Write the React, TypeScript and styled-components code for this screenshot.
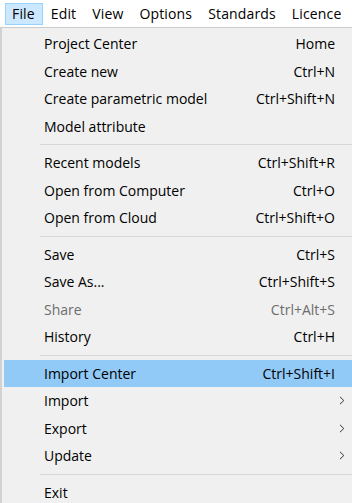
import React from "react";
import styled, { createGlobalStyle } from "styled-components";

const Global = createGlobalStyle`
  html, body { margin: 0; padding: 0; background: #ffffff; overflow: hidden; }
  body { font-family: "Open Sans", "Noto Sans", Arial, sans-serif; }
`;

const Page = styled.div`
  width: 352px;
  height: 503px;
  overflow: hidden;
  background: #ffffff;
  font-size: 14px;
  color: #000;
`;

const MenuBar = styled.div`
  display: flex;
  align-items: center;
  height: 27px;
  padding-left: 5px;
  background: #ffffff;
`;

const BarItem = styled.div<{ $active?: boolean }>`
  height: 22px;
  box-sizing: border-box;
  display: flex;
  align-items: center;
  padding: 0 7px 0 6px;
  margin-right: 1px;
  letter-spacing: 0.15px;
  border: 1px solid ${(p) => (p.$active ? "#99d1ff" : "transparent")};
  background: ${(p) => (p.$active ? "#cce8ff" : "transparent")};
  white-space: nowrap;
`;

const Dropdown = styled.div`
  width: 360px;
  height: 476px;
  box-sizing: border-box;
  background: #f0f0f0;
  border-top: 1px solid #cccccc;
  border-left: 2px solid #d2d2d2;
  padding: 2px 0 0 2px;
`;

const Row = styled.div<{ $hover?: boolean; $disabled?: boolean }>`
  height: 27.5px;
  display: flex;
  align-items: center;
  padding-left: 40px;
  padding-right: 25px;
  background: ${(p) => (p.$hover ? "#91c9f7" : "transparent")};
  color: ${(p) => (p.$disabled ? "#6d6d6d" : "#000000")};
  white-space: nowrap;
`;

const Label = styled.span`
  flex: 1;
`;

const Shortcut = styled.span`
  text-align: right;
`;

const Arrow = styled.svg`
  width: 6px;
  height: 9px;
  margin-right: -10px;
`;

const Separator = styled.div`
  height: 9px;
  display: flex;
  align-items: center;
  padding-left: 36px;
  &::after {
    content: "";
    flex: 1;
    height: 1px;
    background: #d7d7d7;
  }
`;

type Item = { label: string; shortcut?: string; sub?: boolean; disabled?: boolean; hover?: boolean } | "sep";

const items: Item[] = [
  { label: "Project Center", shortcut: "Home" },
  { label: "Create new", shortcut: "Ctrl+N" },
  { label: "Create parametric model", shortcut: "Ctrl+Shift+N" },
  { label: "Model attribute" },
  "sep",
  { label: "Recent models", shortcut: "Ctrl+Shift+R" },
  { label: "Open from Computer", shortcut: "Ctrl+O" },
  { label: "Open from Cloud", shortcut: "Ctrl+Shift+O" },
  "sep",
  { label: "Save", shortcut: "Ctrl+S" },
  { label: "Save As...", shortcut: "Ctrl+Shift+S" },
  { label: "Share", shortcut: "Ctrl+Alt+S", disabled: true },
  { label: "History", shortcut: "Ctrl+H" },
  "sep",
  { label: "Import Center", shortcut: "Ctrl+Shift+I", hover: true },
  { label: "Import", sub: true },
  { label: "Export", sub: true },
  { label: "Update", sub: true },
  "sep",
  { label: "Exit" },
];

export default function App() {
  return (
    <Page>
      <Global />
      <MenuBar>
        <BarItem $active>File</BarItem>
        <BarItem>Edit</BarItem>
        <BarItem>View</BarItem>
        <BarItem>Options</BarItem>
        <BarItem>Standards</BarItem>
        <BarItem>Licence</BarItem>
      </MenuBar>
      <Dropdown>
        {items.map((it, i) =>
          it === "sep" ? (
            <Separator key={i} />
          ) : (
            <Row key={i} $hover={it.hover} $disabled={it.disabled}>
              <Label>{it.label}</Label>
              {it.shortcut && <Shortcut>{it.shortcut}</Shortcut>}
              {it.sub && (
                <Arrow viewBox="0 0 6 9">
                  <path d="M1 0.8 L4.8 4.5 L1 8.2" fill="none" stroke="#333" strokeWidth="1" />
                </Arrow>
              )}
            </Row>
          )
        )}
      </Dropdown>
    </Page>
  );
}
